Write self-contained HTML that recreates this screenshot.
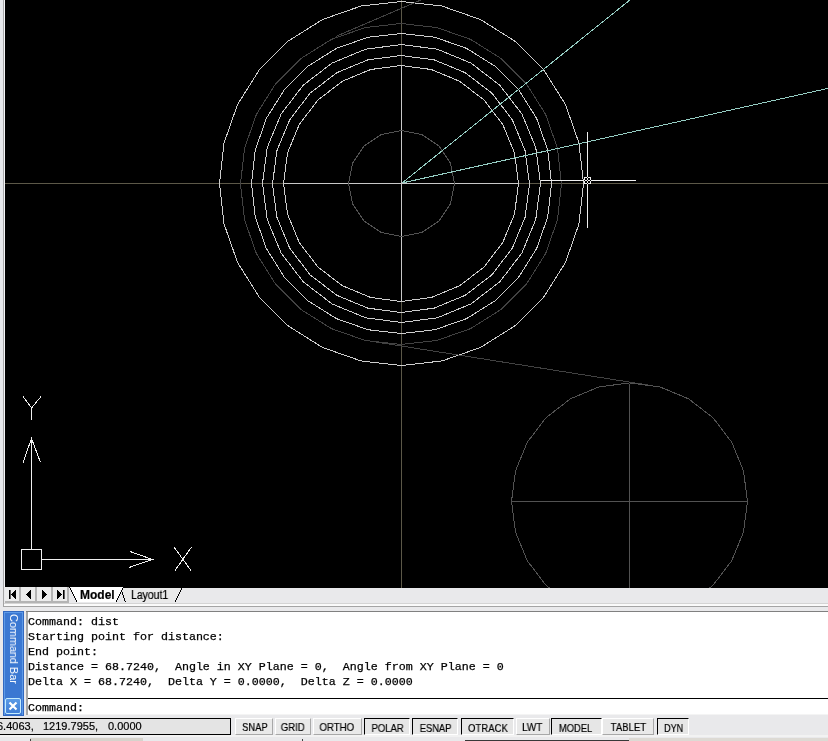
<!DOCTYPE html>
<html><head><meta charset="utf-8"><style>
html,body{margin:0;padding:0}
body{width:828px;height:741px;overflow:hidden;position:relative;background:#e9e9eb;font-family:"Liberation Sans",sans-serif}
.a{position:absolute}
.t{font-size:11px;line-height:13px;white-space:pre;will-change:transform;-webkit-text-stroke:0.2px #000}
.mono,.btn,.tx{will-change:transform}
.tx{-webkit-text-stroke:0.2px #000}
.mono{font-family:"Liberation Mono",monospace;font-size:11.67px;color:#000;white-space:pre;line-height:15px;-webkit-text-stroke:0.25px #000}
.btn{position:absolute;top:718px;height:17px;box-sizing:border-box;background:#e9e9e9;font-size:11px;line-height:16px;text-align:center;color:#000;border-left:1px solid #fff;border-top:1px solid #fff;border-right:1px solid #a8a8a8;border-bottom:1px solid #a8a8a8}
.btn.p{border-left:1px solid #000;border-top:1px solid #000;border-right:1px solid #fff;border-bottom:1px solid #fff;background:#e6e6e6;line-height:15px}
</style></head><body>
<!-- left frame -->
<div class="a" style="left:0;top:0;width:3px;height:587px;background:#e6e8ec"></div>
<div class="a" style="left:3px;top:0;width:1px;height:587px;background:#a8a8aa"></div>
<div class="a" style="left:4px;top:0;width:1px;height:587px;background:#f4f6f8"></div>
<svg width="828" height="588" style="position:absolute;left:0;top:0" shape-rendering="crispEdges"><rect x="5" y="0" width="823" height="588" fill="#000"/><line x1="5" y1="183.5" x2="828" y2="183.5" stroke="#5c5848"/><line x1="401.5" y1="0" x2="401.5" y2="588" stroke="#5c5848"/><line x1="283.5" y1="183.5" x2="518.5" y2="183.5" stroke="#c8c8c8"/><line x1="401.5" y1="65.5" x2="401.5" y2="301.5" stroke="#c8c8c8"/><polygon points="454.50,183.50 450.47,163.22 438.98,146.02 421.78,134.53 401.50,130.50 381.22,134.53 364.02,146.02 352.53,163.22 348.50,183.50 352.53,203.78 364.02,220.98 381.22,232.47 401.50,236.50 421.78,232.47 438.98,220.98 450.47,203.78" fill="none" stroke="#525252"/><polygon points="561.50,184.00 557.48,148.29 545.61,114.36 526.48,83.93 501.07,58.52 470.64,39.39 436.71,27.52 401.00,23.50 365.29,27.52 331.36,39.39 300.93,58.52 275.52,83.93 256.39,114.36 244.52,148.29 240.50,184.00 244.52,219.71 256.39,253.64 275.52,284.07 300.93,309.48 331.36,328.61 365.29,340.48 401.00,344.50 436.71,340.48 470.64,328.61 501.07,309.48 526.48,284.07 545.61,253.64 557.48,219.71" fill="none" stroke="#424242"/><polygon points="518.50,183.50 514.50,152.96 502.76,124.50 484.09,100.06 459.75,81.31 431.41,69.52 401.00,65.50 370.59,69.52 342.25,81.31 317.91,100.06 299.24,124.50 287.50,152.96 283.50,183.50 287.50,214.04 299.24,242.50 317.91,266.94 342.25,285.69 370.59,297.48 401.00,301.50 431.41,297.48 459.75,285.69 484.09,266.94 502.76,242.50 514.50,214.04" fill="none" stroke="#cdcdcd"/><polygon points="529.50,184.00 525.12,150.74 512.28,119.75 491.86,93.14 465.25,72.72 434.26,59.88 401.00,55.50 367.74,59.88 336.75,72.72 310.14,93.14 289.72,119.75 276.88,150.74 272.50,184.00 276.88,217.26 289.72,248.25 310.14,274.86 336.75,295.28 367.74,308.12 401.00,312.50 434.26,308.12 465.25,295.28 491.86,274.86 512.28,248.25 525.12,217.26" fill="none" stroke="#cdcdcd"/><polygon points="540.50,183.50 535.76,147.52 521.88,114.00 499.79,85.21 471.00,63.12 437.48,49.24 401.50,44.50 365.52,49.24 332.00,63.12 303.21,85.21 281.12,114.00 267.24,147.52 262.50,183.50 267.24,219.48 281.12,253.00 303.21,281.79 332.00,303.88 365.52,317.76 401.50,322.50 437.48,317.76 471.00,303.88 499.79,281.79 521.88,253.00 535.76,219.48" fill="none" stroke="#cdcdcd"/><polygon points="551.50,183.50 547.74,150.12 536.65,118.42 518.77,89.98 495.02,66.23 466.58,48.35 434.88,37.26 401.50,33.50 368.12,37.26 336.42,48.35 307.98,66.23 284.23,89.98 266.35,118.42 255.26,150.12 251.50,183.50 255.26,216.88 266.35,248.58 284.23,277.02 307.98,300.77 336.42,318.65 368.12,329.74 401.50,333.50 434.88,329.74 466.58,318.65 495.02,300.77 518.77,277.02 536.65,248.58 547.74,216.88" fill="none" stroke="#cdcdcd"/><polygon points="583.50,183.50 578.94,143.00 565.48,104.53 543.79,70.02 514.98,41.21 480.47,19.52 442.00,6.06 401.50,1.50 361.00,6.06 322.53,19.52 288.02,41.21 259.21,70.02 237.52,104.53 224.06,143.00 219.50,183.50 224.06,224.00 237.52,262.47 259.21,296.98 288.02,325.79 322.53,347.48 361.00,360.94 401.50,365.50 442.00,360.94 480.47,347.48 514.98,325.79 543.79,296.98 565.48,262.47 578.94,224.00" fill="none" stroke="#cdcdcd"/><line x1="336" y1="36.4" x2="430" y2="-3.9" stroke="#424242"/><line x1="376" y1="342" x2="648" y2="385" stroke="#424242"/><polygon points="747.50,501.50 743.48,470.80 731.69,442.20 712.94,417.64 688.50,398.79 660.04,386.94 629.50,382.90 598.96,386.94 570.50,398.79 546.06,417.64 527.31,442.20 515.52,470.80 511.50,501.50 515.52,532.20 527.31,560.80 546.06,585.36 570.50,604.21 598.96,616.06 629.50,620.10 660.04,616.06 688.50,604.21 712.94,585.36 731.69,560.80 743.48,532.20" fill="none" stroke="#525252"/><line x1="511.5" y1="501.5" x2="747.5" y2="501.5" stroke="#525252"/><line x1="629.5" y1="383.5" x2="629.5" y2="588" stroke="#525252"/><line x1="402" y1="183" x2="630.5" y2="-0.5" stroke="#96cec4"/><line x1="402" y1="183" x2="828.5" y2="88.3" stroke="#96cec4"/><line x1="587.5" y1="132" x2="587.5" y2="228" stroke="#f0f0f0"/><line x1="541" y1="180.5" x2="636" y2="180.5" stroke="#f0f0f0"/><rect x="584.5" y="177.5" width="6" height="6" fill="#000" stroke="#f0f0f0"/><line x1="587.5" y1="177" x2="587.5" y2="184" stroke="#f0f0f0"/><line x1="584" y1="180.5" x2="591" y2="180.5" stroke="#f0f0f0"/><rect x="587" y="177" width="1" height="1" fill="#000"/><rect x="587" y="183" width="1" height="1" fill="#000"/><rect x="584" y="180" width="1" height="1" fill="#000"/><rect x="590" y="180" width="1" height="1" fill="#000"/><rect x="587" y="180" width="1" height="1" fill="#000"/><rect x="21.5" y="549.5" width="20" height="20" fill="none" stroke="#f0f0f0"/><line x1="31.5" y1="439" x2="31.5" y2="549.5" stroke="#f0f0f0"/><polyline points="23,462.5 31.5,438.5 40.5,462.5" fill="none" stroke="#f0f0f0"/><polyline points="23,396.5 31.5,408 41,396.5" fill="none" stroke="#f0f0f0"/><line x1="31.5" y1="408" x2="31.5" y2="420" stroke="#f0f0f0"/><line x1="41.5" y1="559.5" x2="152.5" y2="559.5" stroke="#f0f0f0"/><polyline points="130,551.5 152.5,559.5 129,567.5" fill="none" stroke="#f0f0f0"/><line x1="174" y1="547" x2="191" y2="570.5" stroke="#f0f0f0"/><line x1="191.5" y1="547" x2="175" y2="570.5" stroke="#f0f0f0"/></svg>
<!-- tab strip -->
<div class="a" style="left:4px;top:588px;width:824px;height:15px;background:#e9e9eb"></div><div class="a" style="left:4px;top:587px;width:120px;height:1px;background:#e9e9eb"></div>
<div class="a" style="left:3px;top:587px;width:1px;height:20px;background:#a4a4a4"></div>
<div class="a" style="left:5px;top:601px;width:64px;height:2px;background:#b4b4b4"></div>
<div class="a" style="left:4px;top:603px;width:824px;height:1px;background:#d4d4d4"></div>
<div class="a" style="left:4px;top:604px;width:824px;height:2px;background:#fafafa"></div>
<div class="a" style="left:3px;top:606px;width:825px;height:1px;background:#a4a4a4"></div>
<div style="position:absolute;left:5px;top:587px;width:14px;height:14px;background:#ececec;box-shadow:2px 0 0 #b4b4b4"></div><div style="position:absolute;left:21px;top:587px;width:14px;height:14px;background:#ececec;box-shadow:2px 0 0 #b4b4b4"></div><div style="position:absolute;left:37px;top:587px;width:14px;height:14px;background:#ececec;box-shadow:2px 0 0 #b4b4b4"></div><div style="position:absolute;left:53px;top:587px;width:14px;height:14px;background:#ececec;box-shadow:2px 0 0 #b4b4b4"></div><svg width="828" height="30" style="position:absolute;left:0;top:580px" shape-rendering="crispEdges">
<rect x="9" y="10" width="1.6" height="9" fill="#000" shape-rendering="auto"/>
<polygon points="11,14.5 16,10 16,19" fill="#000"/>
<polygon points="26,14.5 31,10 31,19" fill="#000"/>
<polygon points="47,14.5 42,10 42,19" fill="#000"/>
<polygon points="62,14.5 57,10 57,19" fill="#000"/>
<rect x="63" y="10" width="1.6" height="9" fill="#000" shape-rendering="auto"/>
<polygon points="121,8 125.5,22 175,22 182,8" fill="#e9e9e9"/>
<polyline points="121,9 125.5,22" fill="none" stroke="#000"/>
<polyline points="175,22 182,8" fill="none" stroke="#000"/>
<polygon points="69.5,7 77,22 116,22 123.5,7" fill="#fff"/>
<polyline points="69.5,7 77,22" fill="none" stroke="#000"/>
<polyline points="116,22 123.5,7" fill="none" stroke="#000"/>
</svg>
<div class="a tx" style="left:80px;top:588px;font-size:12px;font-weight:bold;line-height:14px">Model</div>
<div class="a tx" style="left:131px;top:588px;font-size:12px;line-height:14px;transform-origin:0 0;transform:scaleX(0.87)">Layout1</div>
<!-- command bar -->
<div class="a" style="left:3px;top:611px;width:21px;height:105px;box-sizing:border-box;background:#3b78d2;border:1px solid #3268c0;box-shadow:inset 1px 0 0 #5c9ae8,inset -1px 0 0 #5c9ae8,inset 0 1px 0 #5c9ae8"></div>
<div class="a tx" style="left:20px;top:614px;width:70px;height:12px;transform-origin:0 0;transform:rotate(90deg) scaleX(0.985);color:#fff;-webkit-text-stroke:0 #fff;font-size:11px;line-height:12px;white-space:nowrap">Command Bar</div>
<div class="a" style="left:5px;top:698px;width:16px;height:16px;box-sizing:border-box;background:linear-gradient(#5a9ae6,#3f7ed6);border:1px solid #c4ecff;border-radius:2px"></div>
<svg class="a" style="left:5px;top:698px" width="16" height="16"><path d="M4.5 4.5 L11.5 11.5 M11.5 4.5 L4.5 11.5" stroke="#fff" stroke-width="2.2"/></svg>
<div class="a" style="left:26px;top:611px;width:802px;height:103px;background:#fff"></div><div class="a" style="left:26px;top:714px;width:802px;height:1px;background:#f4f4f4"></div>
<div class="a" style="left:26px;top:611px;width:2px;height:104px;background:#a8a8a8"></div>
<div class="a" style="left:26px;top:611px;width:802px;height:1px;background:#808080"></div>
<div class="a" style="left:28px;top:698px;width:800px;height:1px;background:#000"></div>
<div class="a mono" style="left:28px;top:615px">Command: dist
Starting point for distance:
End point:
Distance = 68.7240,  Angle in XY Plane = 0,  Angle from XY Plane = 0
Delta X = 68.7240,  Delta Y = 0.0000,  Delta Z = 0.0000</div>
<div class="a mono" style="left:28px;top:701px">Command:</div>
<!-- status bar -->
<div class="a" style="left:-5px;top:718px;width:236px;height:17px;box-sizing:border-box;border:1px solid #000;background:#e4e4e4"></div>
<div class="a t" style="left:-3px;top:720px">6.4063,</div><div class="a t" style="left:43px;top:720px">1219.7955,</div><div class="a t" style="left:108px;top:720px">0.0000</div>
<div class="btn" style="left:235px;width:38px"></div><div class="a tx" style="left:239.6px;top:721px;font-size:11px;line-height:13px;transform-origin:14.8px 0;transform:scaleX(0.858)">SNAP</div><div class="btn" style="left:275px;width:36px"></div><div class="a tx" style="left:279.2px;top:721px;font-size:11px;line-height:13px;transform-origin:13.8px 0;transform:scaleX(0.873)">GRID</div><div class="btn" style="left:313px;width:49px"></div><div class="a tx" style="left:317.2px;top:721px;font-size:11px;line-height:13px;transform-origin:20.0px 0;transform:scaleX(0.875)">ORTHO</div><div class="btn p" style="left:364px;width:46px"></div><div class="a tx" style="left:369.1px;top:722px;font-size:11px;line-height:13px;transform-origin:18.6px 0;transform:scaleX(0.861)">POLAR</div><div class="btn p" style="left:412px;width:46px"></div><div class="a tx" style="left:417.1px;top:722px;font-size:11px;line-height:13px;transform-origin:18.5px 0;transform:scaleX(0.849)">ESNAP</div><div class="btn p" style="left:461px;width:53px"></div><div class="a tx" style="left:464.6px;top:722px;font-size:11px;line-height:13px;transform-origin:23.2px 0;transform:scaleX(0.871)">OTRACK</div><div class="btn" style="left:516px;width:34px"></div><div class="a tx" style="left:521.4px;top:721px;font-size:11px;line-height:13px;transform-origin:11.3px 0;transform:scaleX(0.903)">LWT</div><div class="btn p" style="left:551px;width:51px"></div><div class="a tx" style="left:556.4px;top:722px;font-size:11px;line-height:13px;transform-origin:19.5px 0;transform:scaleX(0.851)">MODEL</div><div class="btn" style="left:602px;width:52px"></div><div class="a tx" style="left:608.0px;top:721px;font-size:11px;line-height:13px;transform-origin:20.5px 0;transform:scaleX(0.871)">TABLET</div><div class="btn p" style="left:657px;width:32px"></div><div class="a tx" style="left:661.8px;top:722px;font-size:11px;line-height:13px;transform-origin:11.7px 0;transform:scaleX(0.824)">DYN</div>
<div class="a" style="left:0;top:735px;width:828px;height:2px;background:#f2f2f2"></div><div class="a" style="left:30px;top:738px;width:113px;height:3px;background:#d6d3cc"></div><div class="a" style="left:629px;top:738px;width:199px;height:3px;background:#dddad4"></div><div class="a" style="left:302px;top:739px;width:1px;height:2px;background:#404040"></div><div class="a" style="left:30px;top:739px;width:1px;height:2px;background:#404040"></div>
<div class="a" style="left:465px;top:740px;width:164px;height:1px;background:#383838"></div>
</body></html>
